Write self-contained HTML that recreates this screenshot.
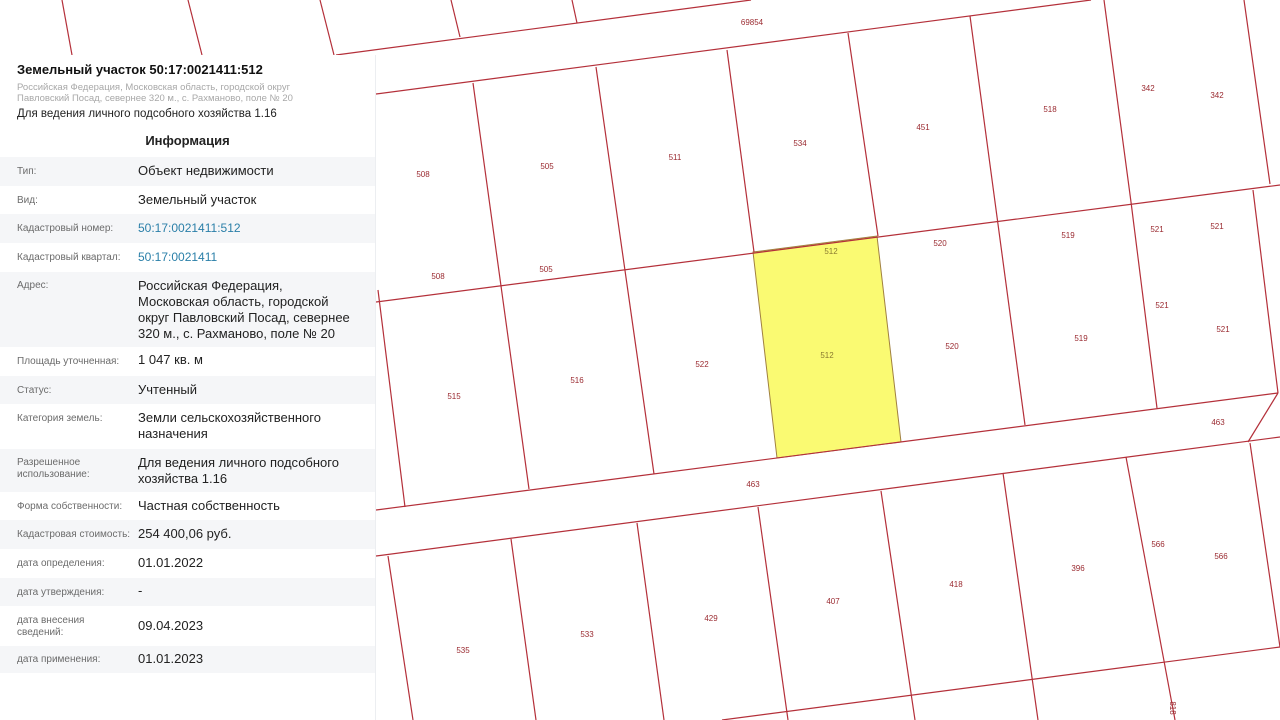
<!DOCTYPE html>
<html><head><meta charset="utf-8"><style>
html,body{margin:0;padding:0;width:1280px;height:720px;overflow:hidden;background:#fff;font-family:"Liberation Sans",sans-serif}
#map{position:absolute;left:0;top:0}
#panel{position:absolute;left:0;top:55px;width:375px;height:665px;background:#fff;border-right:1px solid #eceef1}
.t{position:absolute;white-space:nowrap}
.row{position:absolute;left:0;width:375px}
.g{background:#f5f6f8}
.lab{position:absolute;left:17px;font-size:10px;color:#6b6b6b;line-height:12px}
.val{position:absolute;left:138px;font-size:13px;color:#222;line-height:16px}
.blue{color:#2a7fa8}
</style></head><body>
<svg id="map" width="1280" height="720" viewBox="0 0 1280 720">
<polygon points="753,252 877,236 901,442 777,458" fill="#fafa72" stroke="#a08040" stroke-width="1"/>
<g stroke="#b4303a" stroke-width="1.2" fill="none">
<line x1="62" y1="0" x2="72" y2="55"/>
<line x1="188" y1="0" x2="202" y2="55"/>
<line x1="320" y1="0" x2="334" y2="55"/>
<line x1="451" y1="0" x2="460" y2="37"/>
<line x1="572" y1="0" x2="577" y2="23"/>
<line x1="336" y1="55" x2="751" y2="0"/>
<line x1="376" y1="94" x2="1091" y2="0"/>
<line x1="1104" y1="0" x2="1131" y2="202"/>
<line x1="1244" y1="0" x2="1270" y2="184"/>
<line x1="376" y1="302" x2="1280" y2="185"/>
<line x1="376" y1="510" x2="1278" y2="393"/>
<line x1="1278" y1="393" x2="1248" y2="442"/>
<line x1="376" y1="556" x2="1280" y2="437"/>
<line x1="722" y1="720" x2="1280" y2="647"/>
<line x1="473" y1="83" x2="529" y2="489"/>
<line x1="596" y1="67" x2="654" y2="474"/>
<line x1="727" y1="50" x2="754" y2="252"/>
<line x1="848" y1="33" x2="878" y2="236"/>
<line x1="970" y1="16" x2="1025" y2="425"/>
<line x1="1131" y1="202" x2="1157" y2="408"/>
<line x1="1253" y1="190" x2="1278" y2="393"/>
<line x1="378" y1="290" x2="405" y2="507"/>
<line x1="388" y1="556" x2="413" y2="720"/>
<line x1="511" y1="539" x2="536" y2="720"/>
<line x1="637" y1="523" x2="664" y2="720"/>
<line x1="758" y1="507" x2="788" y2="720"/>
<line x1="881" y1="491" x2="915" y2="720"/>
<line x1="1003" y1="473" x2="1038" y2="720"/>
<line x1="1126" y1="457" x2="1175" y2="720"/>
<line x1="1250" y1="443" x2="1280" y2="647"/>
</g>
<g font-family="Liberation Sans,sans-serif" font-size="8" fill="#9a2a30" text-anchor="middle">
<text x="752" y="25">69854</text>
<text x="423" y="177">508</text><text x="547" y="169">505</text><text x="675" y="160">511</text>
<text x="800" y="146">534</text><text x="923" y="130">451</text><text x="1050" y="112">518</text>
<text x="1148" y="91">342</text><text x="1217" y="98">342</text>
<text x="438" y="279">508</text><text x="546" y="272">505</text>
<text x="831" y="254" fill="#8a7a30">512</text><text x="940" y="246">520</text><text x="1068" y="238">519</text>
<text x="1157" y="232">521</text><text x="1217" y="229">521</text><text x="1162" y="308">521</text><text x="1223" y="332">521</text>
<text x="454" y="399">515</text><text x="577" y="383">516</text><text x="702" y="367">522</text>
<text x="827" y="358" fill="#8a7a30">512</text><text x="952" y="349">520</text><text x="1081" y="341">519</text>
<text x="1218" y="425">463</text><text x="753" y="487">463</text>
<text x="463" y="653">535</text><text x="587" y="637">533</text><text x="711" y="621">429</text>
<text x="833" y="604">407</text><text x="956" y="587">418</text><text x="1078" y="571">396</text>
<text x="1158" y="547">566</text><text x="1221" y="559">566</text>
<text x="1170" y="708" transform="rotate(90 1170 708)">818</text>
</g>
</svg>
<div id="panel">
<div class="t" style="left:17px;top:7px;font-size:13px;font-weight:bold;color:#111">Земельный участок 50:17:0021411:512</div>
<div class="t" style="left:17px;top:27px;font-size:9.5px;color:#a8a8a8;line-height:11px">Российская Федерация, Московская область, городской округ<br>Павловский Посад, севернее 320 м., с. Рахманово, поле № 20</div>
<div class="t" style="left:17px;top:53px;font-size:11.5px;color:#222">Для ведения личного подсобного хозяйства 1.16</div>
<div class="t" style="left:0;width:375px;text-align:center;top:78px;font-size:13px;font-weight:bold;color:#222">Информация</div>

<div class="row g" style="top:102px;height:29px"><div class="lab" style="top:9px">Тип:</div><div class="val" style="top:6px">Объект недвижимости</div></div>
<div class="row" style="top:131px;height:28px"><div class="lab" style="top:9px">Вид:</div><div class="val" style="top:6px">Земельный участок</div></div>
<div class="row g" style="top:159px;height:29px"><div class="lab" style="top:9px">Кадастровый номер:</div><div class="val blue" style="top:6px;font-size:12px">50:17:0021411:512</div></div>
<div class="row" style="top:188px;height:29px"><div class="lab" style="top:9px">Кадастровый квартал:</div><div class="val blue" style="top:6px;font-size:12px">50:17:0021411</div></div>
<div class="row g" style="top:217px;height:75px"><div class="lab" style="top:8px">Адрес:</div><div class="val" style="top:6px">Российская Федерация,<br>Московская область, городской<br>округ Павловский Посад, севернее<br>320 м., с. Рахманово, поле № 20</div></div>
<div class="row" style="top:292px;height:29px"><div class="lab" style="top:9px">Площадь уточненная:</div><div class="val" style="top:5px">1 047 кв. м</div></div>
<div class="row g" style="top:321px;height:28px"><div class="lab" style="top:9px">Статус:</div><div class="val" style="top:6px">Учтенный</div></div>
<div class="row" style="top:349px;height:45px"><div class="lab" style="top:9px">Категория земель:</div><div class="val" style="top:6px">Земли сельскохозяйственного<br>назначения</div></div>
<div class="row g" style="top:394px;height:43px"><div class="lab" style="top:8px">Разрешенное<br>использование:</div><div class="val" style="top:6px">Для ведения личного подсобного<br>хозяйства 1.16</div></div>
<div class="row" style="top:437px;height:28px"><div class="lab" style="top:9px">Форма собственности:</div><div class="val" style="top:6px">Частная собственность</div></div>
<div class="row g" style="top:465px;height:29px"><div class="lab" style="top:9px">Кадастровая стоимость:</div><div class="val" style="top:6px">254 400,06 руб.</div></div>
<div class="row" style="top:494px;height:29px"><div class="lab" style="top:9px">дата определения:</div><div class="val" style="top:6px">01.01.2022</div></div>
<div class="row g" style="top:523px;height:28px"><div class="lab" style="top:9px">дата утверждения:</div><div class="val" style="top:5px">-</div></div>
<div class="row" style="top:551px;height:40px"><div class="lab" style="top:9px">дата внесения<br>сведений:</div><div class="val" style="top:12px">09.04.2023</div></div>
<div class="row g" style="top:591px;height:27px"><div class="lab" style="top:8px">дата применения:</div><div class="val" style="top:5px">01.01.2023</div></div>
</div>
</body></html>
